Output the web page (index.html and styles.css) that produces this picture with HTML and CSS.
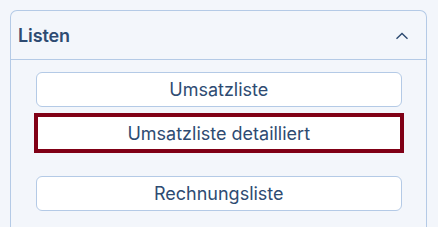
FILE: index.html
```html
<!DOCTYPE html>
<html lang="de">
<head>
<meta charset="utf-8">
<title>Listen</title>
<link rel="stylesheet" href="styles.css">
</head>
<body>
<section class="panel">
  <header class="panel-header">
    <h2 class="panel-title">Listen</h2>
    <svg class="chevron" width="14" height="8" viewBox="0 0 14 8" aria-hidden="true">
      <path d="M1.5 6.8 L7 1.5 L12.5 6.8" fill="none" stroke="#2c4a70" stroke-width="1.4"/>
    </svg>
  </header>
  <div class="panel-body">
    <button class="list-btn">Umsatzliste</button>
    <button class="list-btn is-focused">Umsatzliste detailliert</button>
    <button class="list-btn spaced">Rechnungsliste</button>
  </div>
</section>
</body>
</html>
```
FILE: styles.css
```css
html, body {
  margin: 0;
  background: #f3f6fb;
}
body {
  padding: 10px 11px 0 10px;
  font-family: Inter, "Noto Sans", sans-serif;
  color: #2e4b72;
}
.panel {
  border: 1.5px solid #b4cae6;
  border-bottom: none;
  border-radius: 7px 7px 0 0;
  height: 240px;
  box-sizing: border-box;
}
.panel-header {
  height: 49px;
  box-sizing: border-box;
  border-bottom: 1.5px solid #b4cae6;
  display: flex;
  align-items: center;
  justify-content: space-between;
  padding: 0 17px 0 7px;
}
.panel-title {
  margin: 0;
  font-size: 18px;
  font-weight: 600;
  letter-spacing: -0.1px;
  color: #2e4b72;
}
.chevron {
  display: block;
  margin-top: 1px;
}
.panel-body {
  display: flex;
  flex-direction: column;
  padding: 12px 24px 0 24.5px;
}
.list-btn {
  height: 35px;
  background: #ffffff;
  border: 1px solid #b4cae6;
  border-radius: 6px;
  font-family: Inter, "Noto Sans", sans-serif;
  font-size: 18px;
  font-weight: 400;
  color: #2e4b72;
  padding: 0;
  margin: 0 0 8px 0;
}
.list-btn.is-focused {
  height: 36px;
  border-radius: 0;
  outline: 4px solid #800016;
  outline-offset: -2px;
}
.list-btn.spaced {
  margin-top: 17px;
}
```
